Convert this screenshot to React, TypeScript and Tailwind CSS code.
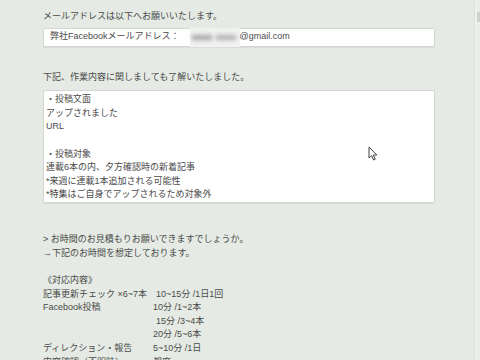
const font = "font-['Liberation_Sans','Noto_Sans_CJK_JP',sans-serif]";

function Pointer() {
  return (
    <svg className="absolute left-[324px] top-[55px]" width="10" height="15" viewBox="0 0 10 15">
      <path d="M1 1 L1 12 L3.6 9.6 L5.6 14 L7.2 13.3 L5.3 9 L8.8 9 Z" fill="#fff" stroke="#444" strokeWidth="1" strokeLinejoin="round" />
    </svg>
  );
}

const noteLines = [
  '・投稿文面',
  'アップされました',
  'URL',
  '',
  '・投稿対象',
  '連載6本の内、夕方確認時の新着記事',
  '*来週に連載1本追加される可能性',
  '*特集はご自身でアップされるため対象外',
];

const rows: { left: string; right: string; indent?: boolean }[] = [
  { left: '記事更新チェック ×6~7本', right: '10~15分 /1日1回', indent: true },
  { left: 'Facebook投稿', right: '10分 /1~2本' },
  { left: '', right: '15分 /3~4本', indent: true },
  { left: '', right: '20分 /5~6本' },
  { left: 'ディレクション・報告', right: '5~10分 /1日' },
  { left: '内容確認（不明時）', right: '都度' },
];

export default function App() {
  return (
    <div className={`flex h-[360px] w-[480px] overflow-hidden bg-[#e5ebe4] text-[9px] leading-[13.6px] text-[#4a4a4a] ${font}`}>
      <main className="w-[474px] pl-[43px] pt-[10px]">
        <p>メールアドレスは以下へお願いいたします。</p>

        <div className="mt-[4px] flex h-[19px] w-[392px] items-center rounded-[2px] border border-[#d3d6d2] bg-white pl-[6px] shadow-[0_1px_1px_rgba(0,0,0,0.06)]">
          <span>弊社Facebookメールアドレス：</span>
          <span className="ml-[10px] flex h-[19px] w-[50px] items-center gap-[4px] bg-[#f1f1f1] px-[2px]">
            <span className="h-[5px] w-[20px] bg-[#a5a5a5] blur-[2px]" />
            <span className="h-[5px] w-[20px] bg-[#b0b0b0] blur-[2px]" />
          </span>
          <span>@gmail.com</span>
        </div>

        <p className="mt-[24px]">下記、作業内容に関しましても了解いたしました。</p>

        <div className="relative mt-[6px] h-[113px] w-[392px] rounded-[2px] border border-[#d3d6d2] bg-white pl-[2px] pt-[2px] shadow-[0_1px_1px_rgba(0,0,0,0.06)]">
          {noteLines.map((line, i) => (
            <div key={i}>{line || '\u00a0'}</div>
          ))}
          <Pointer />
        </div>

        <div className="mt-[30px]">
          <p>&gt; お時間のお見積もりお願いできますでしょうか。</p>
          <p>→下記のお時間を想定しております。</p>
          <p>&nbsp;</p>
          <p>《対応内容》</p>
          {rows.map((r, i) => (
            <div key={i} className="flex">
              <span className="w-[110px] whitespace-nowrap">{r.left}</span>
              <span className={r.indent ? 'pl-[3px]' : ''}>{r.right}</span>
            </div>
          ))}
        </div>
      </main>
      <div className="w-[3px] border-l border-[#dbe1da] bg-[#eef2ed]" />
      <div className="relative w-[3px] bg-[#e8ede7]">
        <div className="absolute left-0 top-[12px] h-[10px] w-[3px] bg-[#cfd3ce]" />
      </div>
    </div>
  );
}
